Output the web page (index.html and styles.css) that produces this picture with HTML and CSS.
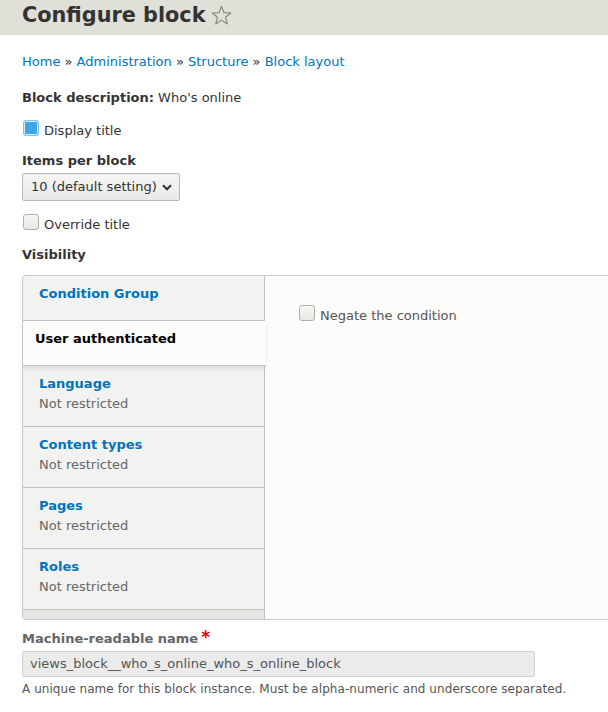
FILE: index.html
```html
<!DOCTYPE html>
<html>
<head>
<meta charset="utf-8">
<link rel="stylesheet" href="styles.css">
</head>
<body>
<header class="page-head">
  <h1 class="page-title">Configure block <svg class="star" width="21" height="21" viewBox="0 0 20 20"><polygon points="10,1.3 12.4,7.3 18.8,7.6 13.8,11.6 15.5,18 10,14.4 4.5,18 6.2,11.6 1.2,7.6 7.6,7.3" fill="none" stroke="#86867a" stroke-width="1.1" stroke-linejoin="round"/></svg></h1>
</header>
<main class="content">
  <nav class="breadcrumb"><a>Home</a> » <a>Administration</a> » <a>Structure</a> » <a>Block layout</a></nav>
  <div class="item"><strong>Block description:</strong> Who's online</div>
  <label class="check first"><span class="box checked"></span>Display title</label>
  <div class="field">
    <div class="label">Items per block</div>
    <div class="select">10 (default setting)<svg class="chev" width="10" height="7" viewBox="0 0 10 7"><path d="M1 1.3 L5 5.3 L9 1.3" fill="none" stroke="#333" stroke-width="2"/></svg></div>
  </div>
  <label class="check override"><span class="box"></span>Override title</label>
  <div class="label vis">Visibility</div>
  <div class="vtabs">
    <ul class="menu">
      <li class="tab short"><a class="ttl">Condition Group</a></li>
      <li class="tab selected"><span class="ttl">User authenticated</span></li>
      <li class="tab"><a class="ttl">Language</a><span class="sum">Not restricted</span></li>
      <li class="tab"><a class="ttl">Content types</a><span class="sum">Not restricted</span></li>
      <li class="tab"><a class="ttl">Pages</a><span class="sum">Not restricted</span></li>
      <li class="tab"><a class="ttl">Roles</a><span class="sum">Not restricted</span></li>
      <li class="foot"></li>
    </ul>
    <div class="pane">
      <label class="check neg"><span class="box"></span>Negate the condition</label>
    </div>
  </div>
  <div class="field machine">
    <div class="label gray">Machine-readable name<span class="req">*</span></div>
    <div class="input">views_block__who_s_online_who_s_online_block</div>
    <div class="desc">A unique name for this block instance. Must be alpha-numeric and underscore separated.</div>
  </div>
</main>
</body>
</html>
```
FILE: styles.css
```css
html, body { margin: 0; padding: 0; background: #fff; }
body { font-family: "DejaVu Sans", sans-serif; font-size: 13px; color: #333; line-height: 1.5; }
.page-head { background: #e0e0d8; height: 35px; padding: 0 22px; box-sizing: border-box; }
.page-title { margin: 0; font-size: 20.8px; line-height: 30px; font-weight: bold; color: #333; display: flex; align-items: center; gap: 5px; }
.star { margin-top: 0; }
.content { padding: 0 22px; }
.breadcrumb { margin-top: 17px; height: 20px; line-height: 20px; color: #333; }
.breadcrumb a { color: #0074bd; }
.item { margin-top: 16px; line-height: 20px; }
.check { display: flex; align-items: flex-end; gap: 5px; line-height: 20px; }
.check .box { width: 14px; height: 14px; border: 1px solid #b0b0a8; border-radius: 3px; background: linear-gradient(#f6f6f3, #e8e8e6); box-sizing: content-box; margin-bottom: 5px; margin-left: 1px; }
.check .box.checked { background: #3ea8e6; border-color: #7ec3ee; box-shadow: inset 0 0 0 1px #d9eefb; }
.check.first { margin-top: 12px; }
.field { margin-top: 10px; }
.label { font-weight: bold; line-height: 20px; }
.select { margin-top: 2px; width: 158px; height: 28px; box-sizing: border-box; border: 1px solid #b8b8b8; border-radius: 2px; background: linear-gradient(#f6f6f4, #e8e8e8); padding: 0 8px; display: flex; align-items: center; justify-content: space-between; color: #333; }
.chev { margin-right: -1px; }
.check.override { margin-top: 13px; }
.vis { margin-top: 10px; }
.vtabs { margin-top: 10px; margin-right: -22px; display: flex; border: 1px solid #c8c8c8; border-right: 0; border-radius: 4px 0 0 4px; height: 345px; box-sizing: border-box; background: #fcfcfa; }
.menu { list-style: none; margin: 0; padding: 0; width: 241px; flex: none; background: #f2f2f0; border-right: 1px solid #c0c0c0; display: flex; flex-direction: column; border-radius: 4px 0 0 4px; }
.tab { border-bottom: 1px solid #c0c0c0; padding: 8px 16px 10px; height: 61px; box-sizing: border-box; display: flex; flex-direction: column; }
.tab.short { height: 45px; }
.tab .ttl { color: #0074bd; font-weight: bold; line-height: 20px; }
.tab .sum { color: #666; line-height: 20px; }
.tab.selected { height: 45px; background: #fcfcfa; margin-right: -2px; padding: 8px 12px; box-shadow: 0 3px 4px rgba(0,0,0,0.08); position: relative; z-index: 1; border-bottom-color: #c8c8c8; }
.tab.selected .ttl { color: #000; }
.foot { flex: 1; background: #e6e5e1; }
.pane { flex: 1; padding-top: 29px; padding-left: 33px; }
.check.neg { color: #555; }
.machine { margin-top: 9px; }
.label.gray { color: #666; display: flex; align-items: baseline; }
.req { color: #e00; margin-left: 3px; font-size: 17px; line-height: 16px; }
.input { margin-top: 2px; width: 513px; height: 26px; box-sizing: border-box; border: 1px solid #d0d0d0; border-radius: 2px; background: #ebebeb; color: #555; padding: 0 7px; display: flex; align-items: center; }
.desc { font-size: 12px; color: #555; margin-top: 3px; line-height: 18px; letter-spacing: 0.06px; }
```
